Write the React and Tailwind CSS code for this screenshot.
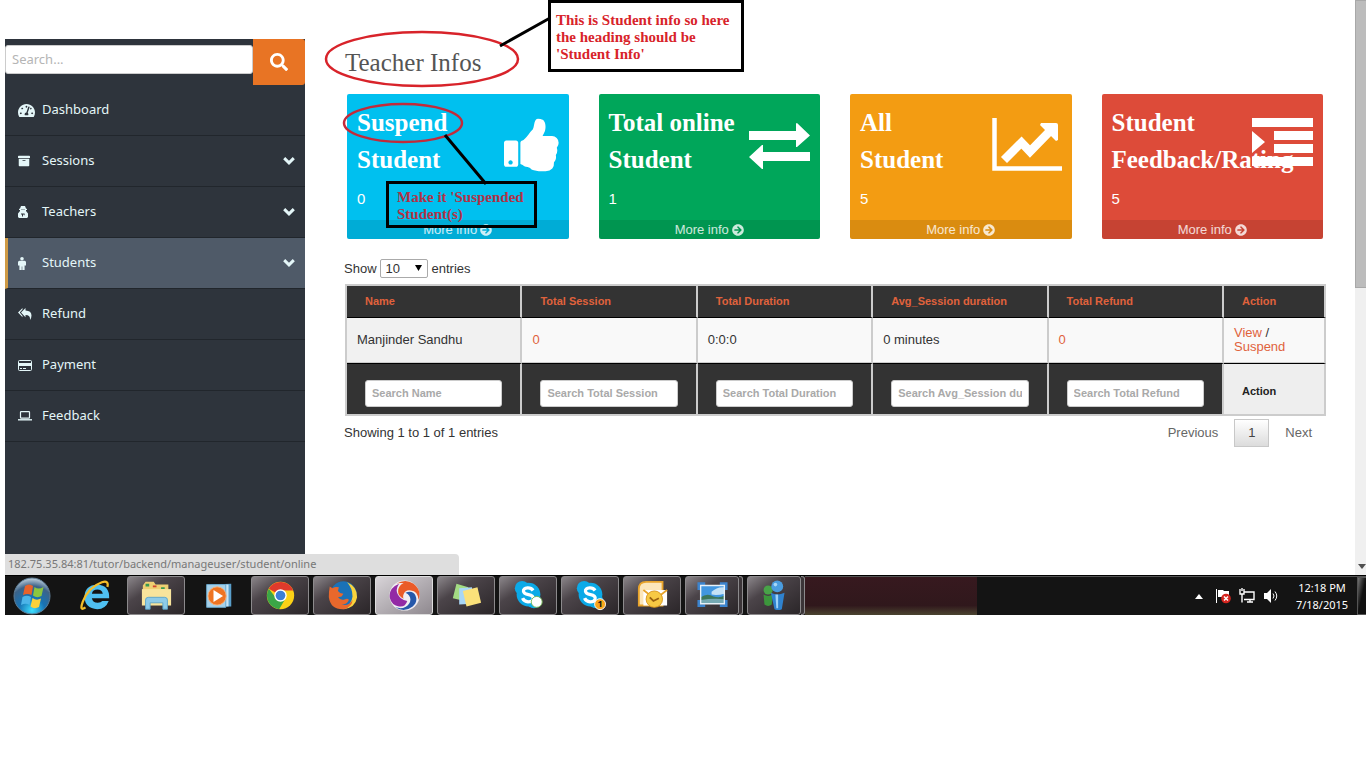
import React from "react";
import { FaSearch, FaTachometerAlt, FaArchive, FaArrowCircleRight } from "react-icons/fa";

const RobotIcon = () => (
  <svg viewBox="0 0 10 12" className="h-3 w-[10px]" fill="currentColor" aria-hidden="true">
    <path fillRule="evenodd" d="M3 0h4l1 2.500 1 .5v1H8v1l2 2.500V11L9 12H1l-1-1V7.500L2 5V4H1V3l1-.5zM3.500 3v.8h1V3zM5.500 3v.8h1V3zM3 7.500v1h1v2h1v-2h.8v.8h.8V7.500z" />
  </svg>
);

const PersonIcon = () => (
  <svg viewBox="0 0 8 13" className="h-[13px] w-2" fill="currentColor" aria-hidden="true">
    <circle cx="4" cy="1.800" r="1.800" />
    <path d="M1.500 3.800h5Q8 3.800 8 5.300v3.200H6.600V13H4.300V9.500h-.6V13H1.400V8.500H0V5.300q0-1.500 1.500-1.500z" />
  </svg>
);

const ReplyAllIcon = () => (
  <svg viewBox="0 0 14 12" className="h-3 w-[14px]" fill="currentColor" aria-hidden="true">
    <path d="M4.500 0v1.500L1.800 4.600l2.700 3.100v1.500L0 4.600z" />
    <path d="M7.500 0v2.500q6 .2 6 5 0 2.500-1.500 4.500.6-5-4.500-5v2.200L3 4.600z" />
  </svg>
);

const CardIcon = () => (
  <svg viewBox="0 0 14 11" className="h-[11px] w-[14px]" aria-hidden="true">
    <rect x=".5" y=".5" width="13" height="10" rx="1" fill="none" stroke="currentColor" />
    <path d="M1 3h12v3H1zM2 8h2v1H2zM5 8h3v1H5z" fill="currentColor" />
  </svg>
);

const LaptopIcon = () => (
  <svg viewBox="0 0 14 10" className="h-[10px] w-[14px]" fill="none" stroke="currentColor" aria-hidden="true">
    <rect x="2.500" y=".6" width="9" height="6.500" rx=".6" strokeWidth="1.200" />
    <path d="M0 8.800h14" strokeWidth="1.400" />
  </svg>
);

const Chevron = () => (
  <svg viewBox="0 0 12 8" className="h-2 w-3" fill="none" stroke="currentColor" strokeWidth="3" aria-hidden="true">
    <path d="M1.200 1.200L6 5.800l4.800-4.600" />
  </svg>
);

const menu = [
  { label: "Dashboard", icon: <FaTachometerAlt size={17} /> },
  { label: "Sessions", icon: <FaArchive size={12} />, open: true },
  { label: "Teachers", icon: <RobotIcon />, open: true },
  { label: "Students", icon: <PersonIcon />, open: true, active: true },
  { label: "Refund", icon: <ReplyAllIcon /> },
  { label: "Payment", icon: <CardIcon /> },
  { label: "Feedback", icon: <LaptopIcon /> },
];

const Thumb = () => (
  <svg viewBox="0 -20 1610 1580" className="h-[54px] w-[55px]" fill="currentColor" aria-hidden="true">
    <path d="M256 1280q0-26-19-45t-45-19-45 19-19 45 19 45 45 19 45-19 19-45zm160-576v640q0 26-19 45t-45 19H64q-26 0-45-19T0 1344V704q0-26 19-45t45-19h288q26 0 45 19t19 45z" />
    <path d="M1600 704q0 86-55 149 15 44 15 76 3 76-43 137 17 56 0 117-15 57-54 94 9 112-49 181-64 76-197 78h-129q-66 0-144-15.500t-121.500-29T767 1443q-92-32-123-33-33-1-58.500-24.500T480 1329V704q0-25 18-43.500t43-20.500q24-2 76-59t101-121q68-87 101-120 18-18 31-48t17.500-48.500T880 180q7-39 12.500-61t19.500-52 34-50q19-19 45-19 46 0 82.500 10.500t60 26 40 40.500 24 45 12 50 5 45 .5 39q0 38-9.500 76t-19 60-27.500 56q-3 6-10 18t-11 22-8 24h277q78 0 135 57t57 135z" />
  </svg>
);

const Exchange = () => (
  <svg viewBox="0 0 61 46" className="mt-[5px] h-[46px] w-[61px]" fill="currentColor" aria-hidden="true">
    <path d="M0 8h47V1q0-1 1-1L61 12.500 48 24h-1v-7H0zM61 29H14v-7h-1L0 34l13 12h1v-8h47z" />
  </svg>
);

const Chart = () => (
  <svg viewBox="0 0 70 53" className="h-[53px] w-[70px]" fill="none" stroke="currentColor" aria-hidden="true">
    <path d="M2.500 0v50.500H70" strokeWidth="4.500" />
    <path d="M12 42l17.500-17.500 8.500 9L58 13" strokeWidth="8.500" />
    <path d="M49 5h15q2 0 2 2v15l-2 1L48 7z" fill="currentColor" stroke="none" />
  </svg>
);

const Indent = () => (
  <svg viewBox="0 0 61 48" className="h-12 w-[61px]" fill="currentColor" aria-hidden="true">
    <path d="M0 0h61v9H0zM22 13h39v9H22zM22 26h39v9H22zM0 39h61v9H0zM0 13l13 11L0 35z" />
  </svg>
);

const cards = [
  { a: "Suspend", b: "Student", n: 0, bg: "bg-[#00c0ef]", icon: <Thumb /> },
  { a: "Total online", b: "Student", n: 1, bg: "bg-[#00a65a]", icon: <Exchange /> },
  { a: "All", b: "Student", n: 5, bg: "bg-[#f39c12]", icon: <Chart /> },
  { a: "Student", b: "Feedback/Rating", n: 5, bg: "bg-[#dd4b39]", icon: <Indent /> },
];

const columns = ["Name", "Total Session", "Total Duration", "Avg_Session duration", "Total Refund"];

function Sidebar() {
  return (
    <aside className="mt-[39px] w-[300px] shrink-0 bg-[#2e343c] pb-28 font-['Noto_Sans',sans-serif] text-[13px] text-[#e4f6f8]">
      <form className="flex items-start" onSubmit={(e) => e.preventDefault()}>
        <input
          aria-label="Search"
          placeholder="Search..."
          className="mt-[6px] h-[29px] min-w-0 flex-1 rounded-[3px] border border-[#ccc] bg-white px-[6px] pb-[2px] text-[13px] text-[#444] placeholder:text-[#b5b5b5]"
        />
        <button aria-label="Submit search" className="flex h-[46px] w-[52px] items-center justify-center rounded-r-[3px] bg-[#e87424] text-white">
          <FaSearch size={18} />
        </button>
      </form>
      <nav>
        {menu.map((m) => (
          <a
            key={m.label}
            href="#"
            className={
              m.active
                ? "flex h-[51px] items-center border-b border-l-[3px] border-b-[#21262c] border-l-[#cf9a45] bg-[#4f5a68] pr-[10px] pl-[10px]"
                : "flex h-[51px] items-center border-b border-b-[#21262c] pr-[10px] pl-[13px]"
            }
          >
            <span className="flex w-6 items-center">{m.icon}</span>
            <span className="flex-1">{m.label}</span>
            {m.open && <Chevron />}
          </a>
        ))}
      </nav>
    </aside>
  );
}

function Annotations() {
  return (
    <>
      <svg className="pointer-events-none absolute top-0 left-0 h-60 w-[250px]" viewBox="305 0 250 240" fill="none" aria-hidden="true">
        <ellipse cx="422" cy="59" rx="96" ry="27" stroke="#d8232a" strokeWidth="2.500" />
        <ellipse cx="403" cy="123" rx="59" ry="19" stroke="#c22b3a" strokeWidth="2.500" />
        <path d="M500 46l50-28M445 135l41 49" stroke="#000" strokeWidth="3" />
      </svg>
      <p className="absolute top-0 left-[243px] h-[72px] w-[196px] border-[3px] border-black bg-white px-[5px] pt-[9px] font-['Liberation_Serif',serif] text-[15px] leading-[17px] font-bold text-[#d8232a]">
        This is Student info so here
        <br />
        the heading should be
        <br />
        'Student Info'
      </p>
      <p className="absolute top-[181px] left-[81px] h-[47px] w-[151px] border-[3px] border-black pt-[5px] pl-[8px] font-['Liberation_Serif',serif] text-[15px] leading-[17px] font-bold text-[#b03347]">
        Make it 'Suspended
        <br />
        Student(s)
      </p>
    </>
  );
}

function Main() {
  return (
    <main className="relative min-w-0 flex-1 pt-11 pr-[29px] pl-[39px] text-[#333]">
      <h1 className="pl-[1px] font-['Liberation_Serif',serif] text-[25px] leading-[37px] text-[#555]">Teacher Infos</h1>
      <div className="mx-[3px] mt-[13px] grid grid-cols-4 gap-[30px]">
        {cards.map((c) => (
          <section key={c.a} className={"relative min-w-0 overflow-hidden rounded-[2px] text-white " + c.bg}>
            <div className="px-[10px] pt-[10px]">
              <h2 className="font-['Liberation_Serif',serif] text-[25px] leading-[37px] font-bold">
                {c.a}
                <br />
                {c.b}
              </h2>
              <p className="pt-[11px] pb-[11px] text-[15px] leading-5">{c.n}</p>
            </div>
            <div className="absolute top-6 right-[10px]">{c.icon}</div>
            <a href="#" className="flex items-center justify-center gap-[3px] bg-black/10 leading-[19px] text-white/80">
              More info <FaArrowCircleRight size={12} />
            </a>
          </section>
        ))}
      </div>
      <div className="mt-5 flex h-[19px] items-center gap-[3px]">
        <label htmlFor="len">Show</label>
        <span className="relative flex">
          <select id="len" className="h-[19px] w-12 appearance-none rounded-[2px] border border-[#aaa] bg-white pl-[5px] text-[13px] leading-4">
            <option>10</option>
          </select>
          <svg className="pointer-events-none absolute top-[6px] right-[6px] h-[6px] w-[7px]" viewBox="0 0 7 6" aria-hidden="true">
            <path d="M0 0h7L3.500 6z" />
          </svg>
        </span>
        <span className="pl-[1px]">entries</span>
      </div>
      <div className="mt-[6px] ml-[1px]">
        <table className="w-full table-fixed border-separate border-spacing-0 border-t-2 border-b-2 border-l-2 border-[#ccc] text-left leading-[14px]">
          <colgroup>
            <col />
            <col />
            <col />
            <col />
            <col />
            <col className="w-[102px]" />
          </colgroup>
          <thead>
            <tr className="h-8 bg-[#333] text-[11px] text-[#e0623c]">
              {[...columns, "Action"].map((h) => (
                <th key={h} className="border-r-2 border-b border-r-[#ccc] border-b-black px-[18px] pb-[2px] font-bold">
                  {h}
                </th>
              ))}
            </tr>
          </thead>
          <tbody>
            <tr className="h-[45px] bg-[#f9f9f9]">
              <td className="border-r-2 border-b border-[#ccc] bg-[#f1f1f1] px-[10px]">Manjinder Sandhu</td>
              <td className="border-r-2 border-b border-[#ccc] px-[10px]">
                <a href="#" className="text-[#e0623c]">0</a>
              </td>
              <td className="border-r-2 border-b border-[#ccc] px-[10px]">0:0:0</td>
              <td className="border-r-2 border-b border-[#ccc] px-[10px]">0 minutes</td>
              <td className="border-r-2 border-b border-[#ccc] px-[10px]">
                <a href="#" className="text-[#e0623c]">0</a>
              </td>
              <td className="border-r-2 border-b border-[#ccc] px-[10px]">
                <a href="#" className="text-[#e0623c]">View</a> /<br />
                <a href="#" className="text-[#e0623c]">Suspend</a>
              </td>
            </tr>
          </tbody>
          <tfoot>
            <tr className="h-[51px] bg-[#333] text-[11px]">
              {columns.map((c) => (
                <td key={c} className="border-t border-r-2 border-t-black border-r-[#ccc] px-[18px] pt-4 pb-[7px]">
                  <input
                    aria-label={"Search " + c}
                    placeholder={"Search " + c}
                    className="block h-[27px] w-full rounded-[3px] border border-[#ccc] bg-white px-[6px] pb-[2px] text-[11px] font-bold placeholder:text-[#a9a9a9]"
                  />
                </td>
              ))}
              <th className="border-t border-r-2 border-t-black border-r-[#ccc] bg-[#eee] px-[18px] pt-1 font-bold text-[#222]">Action</th>
            </tr>
          </tfoot>
        </table>
      </div>
      <div className="mt-[3px] flex items-center justify-between">
        <p>Showing 1 to 1 of 1 entries</p>
        <div className="flex items-center gap-4 pr-[14px] text-[#666]">
          <button>Previous</button>
          <button className="h-7 w-[35px] border border-[#c8c8c8] bg-linear-to-b from-white to-[#dcdcdc] text-[#444]">1</button>
          <button>Next</button>
        </div>
      </div>
      <Annotations />
    </main>
  );
}

const iconCls = "h-[31px] w-[31px]";

const Orb = () => (
  <svg viewBox="0 0 38 38" className="h-[38px] w-[38px]" aria-hidden="true">
    <defs>
      <radialGradient id="orb" cx=".5" cy=".9" r=".9">
        <stop offset="0" stopColor="#3fe0ff" />
        <stop offset=".4" stopColor="#1773b4" />
        <stop offset=".75" stopColor="#3d6388" />
        <stop offset="1" stopColor="#c4d4e0" />
      </radialGradient>
    </defs>
    <circle cx="19" cy="19" r="18" fill="url(#orb)" stroke="#5c7c94" />
    <path d="M12 9q4-3 8 0l-1.500 9q-4-2-8.500 0z" fill="#e8622a" />
    <path d="M21.500 10q4 3 9 0l-2 9q-4.500 2.500-8.500-.5z" fill="#8cc63f" />
    <path d="M9.500 20q4.500-2.500 8.500 0l-1.500 8q-3.500-2.500-8.500 0z" fill="#4cb4e8" />
    <path d="M19.500 21q4 3 8.500 .5L26 30q-4.500 2.500-8.500-.5z" fill="#fbd13a" />
  </svg>
);

const InternetE = () => (
  <svg viewBox="0 0 34 34" className={iconCls} aria-hidden="true">
    <path fillRule="evenodd" d="M32 20H13q1 5 6.500 5 3.500 0 5-2h7Q28 32 19 32 5 31 5 18.500T19 5Q32.500 6 32 20zM13 15h12q-1-4.500-6-4.500T13 15z" fill="#4fc0f2" />
    <path d="M6 30Q-1 35 3 24 9 8 24 2.500q8-2.500 6 5" fill="none" stroke="#f4bd2a" strokeWidth="2.500" />
  </svg>
);

const Explorer = () => (
  <svg viewBox="0 0 34 34" className={iconCls} aria-hidden="true">
    <path d="M2 6l3-4h9l2 3h14v22H2z" fill="#efcf72" />
    <path d="M1 10h32v18H1z" fill="#f8e49c" />
    <path d="M5 4h4v3H5zM22 8h4v2h-4z" fill="#3a9a50" />
    <path d="M13 6h4v2h-4z" fill="#d2452f" />
    <path d="M5 32V22q0-3 3-3h18q3 0 3 3v10h-5v-7H10v7z" fill="#8ecbe8" stroke="#5ba5ca" />
  </svg>
);

const Media = () => (
  <svg viewBox="0 0 34 34" className={iconCls} aria-hidden="true">
    <path d="M9 5l22-1v25H9z" fill="#5a9fcb" />
    <path d="M25 5h3v24h-3z" fill="#c7e4f5" />
    <path d="M4 5h21v25H4z" fill="#a6d1ea" stroke="#6aa9cf" />
    <circle cx="15.500" cy="17.500" r="10" fill="#ee7423" stroke="#f8b27c" />
    <path d="M11.500 11v13l10.500-6.500z" fill="#fff" />
  </svg>
);

const Chrome = () => (
  <svg viewBox="0 0 34 34" className={iconCls} aria-hidden="true">
    <circle cx="17" cy="17" r="15" fill="#fcd116" />
    <path d="M17 17L4.200 9.500A15 15 0 0 1 31 11.500H17z" fill="#e03a2c" />
    <path d="M4.200 9.500A15 15 0 0 0 15.500 32l6.500-11-5-3.500-6 1z" fill="#3ba647" />
    <circle cx="17" cy="17" r="6.800" fill="#fff" />
    <circle cx="17" cy="17" r="5.300" fill="#3c7fd6" />
  </svg>
);

const Firefox = () => (
  <svg viewBox="0 0 34 34" className={iconCls} aria-hidden="true">
    <circle cx="18" cy="16" r="14.500" fill="#1a72b8" />
    <path d="M22 2.500q11.500 5 11 16.500-2 12-15 13 9-5 10-14 0-9-6-15.500z" fill="#f9d33c" />
    <path d="M3 7l3 2q3-2 7-1l-1 4q2 3 6 3l-2 3-4 1q3 4 8 2 3-1 4 1-2 5-8 5 8 2 12-5 0 7-9 10Q4 33 2 19 2 12 3 7z" fill="#e8682c" />
  </svg>
);

const Swirl = () => (
  <svg viewBox="0 0 34 34" className={iconCls} aria-hidden="true">
    <circle cx="17" cy="17" r="16.500" fill="#f0edf2" />
    <path d="M8 4Q18-2 27 4q9 7 5.500 18-1-10-8.500-10.500-6-1-8 4-1 3 0 5-6-3-6-8Q10 6 16 3.500 11 3 8 4z" fill="#ea5b28" />
    <path d="M11 4Q5 13 13 20q4 3 7 3-2 7-9 6Q3 28 1 20-1 9 11 4z" fill="#932aa5" />
    <path d="M7 30q10 3 15-4 3-5 0-9-1-2-4-3 8-3 11 3 3 7-3 12-9 7-19 1z" fill="#2658aa" />
  </svg>
);

const Notes = () => (
  <svg viewBox="0 0 34 34" className={iconCls} aria-hidden="true">
    <path d="M6 4l13 4-4 15-13-3z" fill="#a3dc83" />
    <path d="M9 9l14-1 1 18-15 1z" fill="#a8d6f5" />
    <path d="M13 12l16-4 4 17-16 4z" fill="#fbe17a" />
  </svg>
);

const Skype = ({ badge }) => (
  <svg viewBox="0 0 34 34" className={iconCls} aria-hidden="true">
    <circle cx="17" cy="16" r="13" fill="#0baae8" />
    <circle cx="10" cy="9" r="8" fill="#0baae8" />
    <circle cx="23" cy="23" r="8" fill="#0baae8" />
    <path d="M22 11.500Q20 8.500 16 8.700q-5 .5-4.500 3.800.3 2.500 5.500 3.500 6 1.200 5 5-1 3-5.500 3-4.500-.3-6-4" fill="none" stroke="#fff" strokeWidth="3.600" />
    {badge ? (
      <>
        <circle cx="27.500" cy="26.500" r="6" fill="#f9a51a" stroke="#fff" />
        <text x="27.500" y="30" textAnchor="middle" fontSize="10" fontWeight="bold" fontFamily="Noto Sans, sans-serif" fill="#111">1</text>
      </>
    ) : (
      <circle cx="26" cy="24" r="6" fill="#fff" stroke="#72b856" />
    )}
  </svg>
);

const Outlook = () => (
  <svg viewBox="0 0 34 34" className={iconCls} aria-hidden="true">
    <path d="M2 28V10q0-8 8-8h18v26z" fill="#fce6bb" stroke="#e8a32a" strokeWidth="2" />
    <path d="M7 11h26v17H7z" fill="#fff" />
    <path d="M7 11l13 10 13-10" fill="none" stroke="#e8a32a" strokeWidth="2" />
    <circle cx="19" cy="21" r="9" fill="#f7c944" stroke="#d9961d" />
    <path d="M14 19l4 4 6-3" fill="none" stroke="#9a6210" strokeWidth="2" />
  </svg>
);

const Picture = () => (
  <svg viewBox="0 0 34 34" className={iconCls} aria-hidden="true">
    <path d="M2 11V4h7M25 4h7v7M32 22v6h-7M9 28H2v-6" fill="none" stroke="#3c84ce" strokeWidth="3" />
    <path d="M4 6h26v20H4z" fill="#4196e0" />
    <path d="M16 13q6-6 14-5v7q-7 2-14 1z" fill="#c5e2f6" />
    <path d="M4 19q7-5 14-1 7 2 12-1v9H4z" fill="#3c765c" />
    <path d="M4 22q12-2 26-1v5H4z" fill="#75a9b3" />
    <path d="M4 6h26v20H4z" fill="none" stroke="#e8f1f8" strokeWidth="1.500" />
  </svg>
);

const People = () => (
  <svg viewBox="0 0 34 34" className={iconCls} aria-hidden="true">
    <circle cx="10" cy="11" r="5" fill="#48a348" />
    <path d="M5 16q5 3 10 0l-1 11q-4 3-8 0z" fill="#3c963c" />
    <circle cx="20" cy="7" r="6.500" fill="#4a9de0" />
    <path d="M13 14q7 4 15 0l-3 18q-4 2-8 0z" fill="#2f82ce" />
    <path d="M18 16h3v15h-2z" fill="#9ed2f8" />
    <circle cx="18" cy="5" r="2" fill="#a8d6f7" />
  </svg>
);

const btn =
  "flex h-[39px] flex-1 items-center justify-center rounded-[3px] border border-[#8c8a8c] bg-linear-to-br from-[#8b868a] via-[#4b4449] via-35% to-[#2b2629]";

const apps = [
  { name: "File Explorer", icon: <Explorer /> },
  { name: "Media Player", icon: <Media />, plain: true },
  { name: "Chrome", icon: <Chrome /> },
  { name: "Firefox", icon: <Firefox /> },
  { name: "Browser", icon: <Swirl />, active: true },
  { name: "Sticky Notes", icon: <Notes /> },
  { name: "Skype", icon: <Skype /> },
  { name: "Skype messages", icon: <Skype badge /> },
  { name: "Outlook", icon: <Outlook /> },
  { name: "Pictures", icon: <Picture />, stack: true },
  { name: "Messenger", icon: <People />, stack: true },
];

function Taskbar() {
  return (
    <footer className="flex h-10 items-stretch border-t border-black bg-[#141414] font-['Noto_Sans',sans-serif] text-white">
      <button aria-label="Start" className="flex w-[54px] items-center justify-center">
        <Orb />
      </button>
      <button aria-label="Internet Explorer" className="mr-1 flex w-[64px] items-center justify-center pl-2">
        <InternetE />
      </button>
      <div className="flex items-start gap-1">
        {apps.map((a) => (
          <div key={a.name} className="flex w-[58px] items-start">
            <button
              aria-label={a.name}
              className={
                a.plain
                  ? "flex h-[39px] flex-1 items-center justify-center"
                  : a.active
                    ? "flex h-[39px] flex-1 items-center justify-center rounded-[3px] border border-[#ddd] bg-linear-to-br from-[#d8d4d8] to-[#8f898f]"
                    : btn
              }
            >
              {a.icon}
            </button>
            {a.stack && <span className="h-[39px] w-1 rounded-r-[3px] border-y border-r border-[#8c8a8c] bg-[#3b3538]" />}
          </div>
        ))}
      </div>
      <div className="w-[172px] border-t border-[#555] bg-linear-to-b from-[#37191f] via-[#30181c] via-75% to-[#4a4430]" />
      <div className="flex flex-1 items-center justify-end gap-2 border-t border-[#555]">
        <svg viewBox="0 0 8 5" className="mr-1 h-[5px] w-2" fill="#fff" aria-hidden="true">
          <path d="M0 5l4-5 4 5z" />
        </svg>
        <svg viewBox="0 0 16 16" className="h-4 w-4" fill="#fff" aria-hidden="true">
          <path d="M1 1h1v14H1zM3 2h5l1 1h5v6H3z" />
          <circle cx="11" cy="10.500" r="4.800" fill="#d5251f" />
          <path d="M9 8.500l4 4m0-4l-4 4" stroke="#fff" strokeWidth="1.500" />
        </svg>
        <svg viewBox="0 0 16 16" className="h-4 w-4" fill="none" stroke="#fff" aria-hidden="true">
          <path d="M5 4h10v7.500H5M8 14h6M11 11v3M3 6v8.500M1 1v5h4V1M3 0v3" strokeWidth="1.400" />
        </svg>
        <svg viewBox="0 0 16 16" className="h-4 w-4" fill="#fff" aria-hidden="true">
          <path d="M1 5h3l4-4v14l-4-4H1z" />
          <path d="M10 5.500q2 2.500 0 5M12 3.500q3.500 4.500 0 9" fill="none" stroke="#fff" />
        </svg>
        <div className="ml-1 flex w-[62px] flex-col items-center text-center text-[11px] leading-[17px]">
          <span>12:18 PM</span>
          <span>7/18/2015</span>
        </div>
        <button aria-label="Show desktop" className="-ml-1 w-[9px] self-stretch border border-r-0 border-[#555] bg-linear-to-br from-[#777] to-[#111] to-50%" />
      </div>
    </footer>
  );
}

export default function App() {
  return (
    <div className="bg-white pl-[5px] font-['Liberation_Sans',Arial,sans-serif] text-[13px]">
      <div className="flex">
        <div className="flex min-w-0 flex-1 flex-col">
          <div className="flex">
            <Sidebar />
            <Main />
          </div>
          <div className="h-[21px] w-[454px] rounded-tr-[4px] bg-[#dedede] pl-[3px] font-['Noto_Sans',sans-serif] text-[11px] leading-[20px] text-[#777]">
            182.75.35.84:81/tutor/backend/manageuser/student/online
          </div>
        </div>
        <div className="flex w-[11px] shrink-0 flex-col justify-between bg-[#f0f0f0]">
          <div className="h-72 border border-r-0 border-[#a8a8a8] bg-[#bcbcbc]" />
          <svg viewBox="0 0 8 5" className="mb-[6px] ml-[3px] h-[5px] w-2" fill="#505050" aria-hidden="true">
            <path d="M0 0h8L4 5z" />
          </svg>
        </div>
      </div>
      <Taskbar />
    </div>
  );
}
